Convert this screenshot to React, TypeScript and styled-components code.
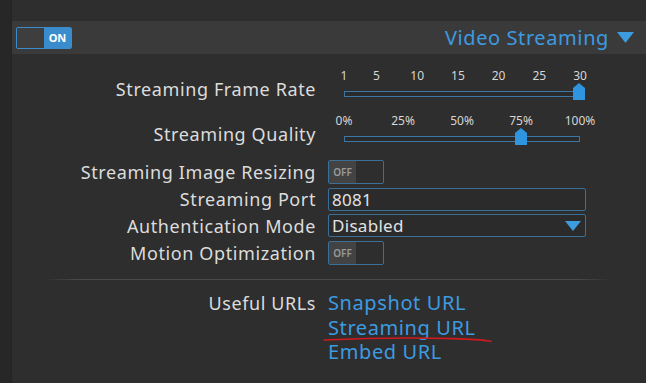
import styled, { createGlobalStyle } from "styled-components";

const GlobalStyle = createGlobalStyle`
  html, body {
    margin: 0;
    padding: 0;
    background: #2e2e2e;
  }
  body {
    font-family: "Noto Sans", "Open Sans", sans-serif;
    color: #dedede;
  }
`;

const frameTicks = [1, 5, 10, 15, 20, 25, 30];
const qualityTicks = [0, 25, 50, 75, 100];

const Toggle = ({ on }: { on?: boolean }) => (
  <Switch $on={on}>
    <SwitchHalf $on={on}>{on ? "" : "OFF"}</SwitchHalf>
    <SwitchHalf $on={on} $right>
      {on ? "ON" : ""}
    </SwitchHalf>
  </Switch>
);

const Handle = ({ pos }: { pos: number }) => (
  <Knob style={{ left: `${pos}%` }} width="12" height="17" viewBox="0 0 12 17">
    <path d="M6 0 L12 5 L12 17 L0 17 L0 5 Z" fill="#2e95de" />
  </Knob>
);

const App = () => {
  return (
    <Page>
      <GlobalStyle />
      <Strip />
      <Main>
        <Header>
          <Toggle on />
          <Title>
            Video Streaming
            <svg width="17" height="11" viewBox="0 0 17 11">
              <path d="M0 0 L17 0 L8.5 11 Z" fill="#3d9be0" />
            </svg>
          </Title>
        </Header>

        <Form>
          <Row $height={45} $align="end">
            <Label $pad={8}>Streaming Frame Rate</Label>
            <Slider>
              <Ticks>
                {frameTicks.map((t) => (
                  <Tick key={t} style={{ left: `${((t - 1) / 29) * 100}%` }}>
                    {t}
                  </Tick>
                ))}
              </Ticks>
              <Track>
                <Handle pos={100} />
              </Track>
            </Slider>
          </Row>

          <Row $height={45} $align="end">
            <Label $pad={8}>Streaming Quality</Label>
            <Slider>
              <Ticks>
                {qualityTicks.map((t) => (
                  <Tick key={t} style={{ left: `${t}%` }}>
                    {t}%
                  </Tick>
                ))}
              </Ticks>
              <Track>
                <Handle pos={75} />
              </Track>
            </Slider>
          </Row>

          <Row $height={28} $top={5}>
            <Label>Streaming Image Resizing</Label>
            <div>
              <Toggle />
            </div>
          </Row>
          <Row $height={26}>
            <Label>Streaming Port</Label>
            <Field>8081</Field>
          </Row>
          <Row $height={27}>
            <Label>Authentication Mode</Label>
            <Field>
              Disabled
              <svg width="16" height="10" viewBox="0 0 16 10">
                <path d="M0 0 L16 0 L8 10 Z" fill="#3d9be0" />
              </svg>
            </Field>
          </Row>
          <Row $height={28}>
            <Label>Motion Optimization</Label>
            <div>
              <Toggle />
            </div>
          </Row>
        </Form>

        <Divider />

        <Row $align="start">
          <Label $top={1}>Useful URLs</Label>
          <Links>
            <LinkText>Snapshot URL</LinkText>
            <LinkText>Streaming URL</LinkText>
            <LinkText>Embed URL</LinkText>
            <Scribble width="172" height="8" viewBox="0 0 172 8">
              <path
                d="M1 4 C 40 2.2, 90 1.4, 130 2.6 S 160 5, 168 5.2"
                stroke="#d01a1f"
                strokeWidth="1.6"
                fill="none"
                strokeLinecap="round"
              />
            </Scribble>
          </Links>
        </Row>
      </Main>
    </Page>
  );
};

const Page = styled.div`
  display: flex;
  width: 646px;
  height: 383px;
  overflow: hidden;
  background: #2e2e2e;
`;

const Strip = styled.div`
  width: 11px;
  flex-shrink: 0;
  background: #272727;
  border-right: 1px solid #242424;
`;

const Main = styled.div`
  flex: 1;
  display: flex;
  flex-direction: column;
  padding-top: 21px;
`;

const Header = styled.div`
  height: 33px;
  display: flex;
  align-items: center;
  justify-content: space-between;
  padding: 0 12px 0 4px;
  background: #3a3a3a;
`;

const Title = styled.div`
  display: flex;
  align-items: center;
  gap: 8px;
  font-size: 20px;
  color: #3d9be0;
  letter-spacing: 0.6px;
  padding-bottom: 1px;
`;

const Switch = styled.div<{ $on?: boolean }>`
  display: flex;
  width: 56px;
  height: ${(p) => (p.$on ? 22 : 24)}px;
  box-sizing: border-box;
  border: 1px solid ${(p) => (p.$on ? "#3a8ccc" : "#3a6f98")};
  border-radius: 2px;
  overflow: hidden;
`;

const SwitchHalf = styled.div<{ $on?: boolean; $right?: boolean }>`
  flex: 1;
  display: flex;
  align-items: center;
  justify-content: center;
  font-size: ${(p) => (p.$on ? 11 : 10)}px;
  font-weight: ${(p) => (p.$on ? 700 : 600)};
  color: ${(p) => (p.$on ? "#ffffff" : "#9a9a9a")};
  background: ${(p) =>
    p.$right ? (p.$on ? "#3a8ccc" : "transparent") : p.$on ? "#3e3e3e" : "#434343"};
`;

const Form = styled.div`
  display: flex;
  flex-direction: column;
  padding-top: 9px;
`;

const Row = styled.div<{ $height?: number; $align?: string; $top?: number }>`
  display: grid;
  grid-template-columns: 304px 1fr;
  column-gap: 12px;
  align-items: ${(p) => p.$align || "center"};
  height: ${(p) => (p.$height ? `${p.$height}px` : "auto")};
  margin-top: ${(p) => p.$top || 0}px;
`;

const Label = styled.div<{ $pad?: number; $top?: number }>`
  text-align: right;
  font-size: 18px;
  letter-spacing: 0.6px;
  line-height: 22px;
  color: #dcdcdc;
  padding-bottom: ${(p) => p.$pad || 0}px;
  padding-top: ${(p) => p.$top || 0}px;
`;

const Slider = styled.div`
  display: flex;
  flex-direction: column;
  padding-left: 16px;
  width: 236px;
`;

const Ticks = styled.div`
  position: relative;
  height: 16px;
  margin-bottom: 7px;
`;

const Tick = styled.span`
  position: absolute;
  top: 0;
  transform: translateX(-50%);
  font-size: 12px;
  line-height: 16px;
  color: #d6d6d6;
  white-space: nowrap;
`;

const Track = styled.div`
  position: relative;
  height: 6px;
  box-sizing: border-box;
  border: 1px solid #3a77a6;
  background: #2a2a2a;
  margin-bottom: 11px;
`;

const Knob = styled.svg`
  position: absolute;
  top: -9px;
  transform: translateX(-50%);
`;

const Field = styled.div`
  width: 258px;
  height: 23px;
  box-sizing: border-box;
  border: 1px solid #3a6f98;
  border-radius: 2px;
  background: #2b2b2b;
  display: flex;
  align-items: center;
  justify-content: space-between;
  padding: 0 4px 0 3px;
  font-size: 17px;
  letter-spacing: 0.3px;
  color: #e2e2e2;
`;

const Divider = styled.div`
  height: 1px;
  margin: 12px 34px 11px 32px;
  background: linear-gradient(
    to right,
    rgba(80, 80, 80, 0),
    #4a4a4a 6%,
    #4a4a4a 94%,
    rgba(80, 80, 80, 0)
  );
`;

const Links = styled.div`
  position: relative;
  display: flex;
  flex-direction: column;
`;

const LinkText = styled.span`
  font-size: 20px;
  line-height: 24.5px;
  color: #3d9be0;
  letter-spacing: 0.6px;
`;

const Scribble = styled.svg`
  position: absolute;
  left: -5px;
  top: 45px;
`;

export default App;
